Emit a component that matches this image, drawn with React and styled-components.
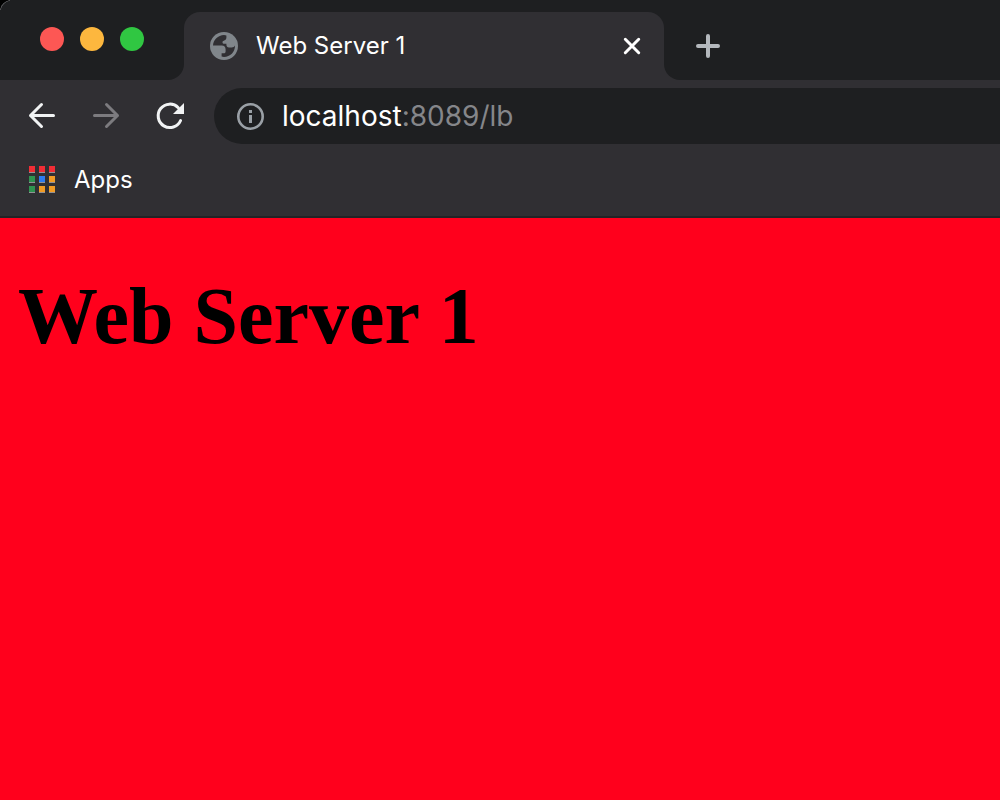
import React from "react";
import styled, { createGlobalStyle } from "styled-components";

const strip = "#1e1f21";
const chrome = "#302f33";
const ui = `Inter, "Liberation Sans", sans-serif`;

const GlobalStyle = createGlobalStyle`
  *, *::before, *::after { box-sizing: border-box; }
  body { margin: 0; background: #000; }
`;

const Window = styled.div`
  display: flex;
  flex-direction: column;
  min-height: 100vh;
  overflow: hidden;
  border-top-left-radius: 12px;
  background: ${chrome};
  font-family: ${ui};
`;

const TabStrip = styled.header`
  display: flex;
  height: 80px;
  background: linear-gradient(${strip} 50%, ${chrome} 50%);
`;

const WindowControls = styled.div`
  display: flex;
  gap: 16px;
  flex: none;
  width: 184px;
  padding: 27px 40px 0;
  border-bottom-right-radius: 16px;
  background:
    radial-gradient(circle at 12px 12px, ${strip} 11px, #77787b 12px) 0 0 / 10px 10px no-repeat,
    ${strip};
`;

const Light = styled.button`
  width: 24px;
  height: 24px;
  padding: 0;
  border: 0;
  border-radius: 50%;
  background: ${(p) => p.$color};
`;

const Tab = styled.div`
  display: flex;
  align-items: center;
  width: 480px;
  margin-top: 12px;
  padding: 0 20px 0 26px;
  border-radius: 16px 16px 0 0;
  background: ${chrome};
  color: #fff;
`;

const TabTitle = styled.span`
  flex: 1;
  margin-left: 18px;
  font-size: 24px;
  line-height: 32px;
`;

const StripRest = styled.div`
  flex: 1;
  padding: 34px 32px 0;
  border-bottom-left-radius: 16px;
  background: ${strip};
`;

const IconButton = styled.button`
  display: flex;
  flex: none;
  padding: 0;
  border: 0;
  background: none;
  color: ${(p) => p.$color || "#f1f3f4"};
`;

const Toolbar = styled.nav`
  display: flex;
  align-items: center;
  gap: 32px;
  height: 72px;
  padding-left: 26px;
`;

const AddressBar = styled.div`
  display: flex;
  flex: 1;
  align-items: center;
  gap: 16px;
  height: 56px;
  margin-left: -4px;
  padding-left: 20px;
  border-radius: 28px 0 0 28px;
  background: ${strip};
`;

const Address = styled.a`
  color: #85868a;
  font-size: 28px;
  line-height: 36px;
  text-decoration: none;
`;

const Host = styled.span`
  color: #fff;
`;

const Bookmarks = styled.nav`
  display: flex;
  align-items: center;
  height: 66px;
  padding: 0 28px 8px;
  border-bottom: 2px solid #232326;
`;

const AppsLink = styled.a`
  display: flex;
  align-items: center;
  gap: 18px;
  color: #fff;
  font-size: 24px;
  line-height: 32px;
  text-decoration: none;
`;

const Page = styled.main`
  flex: 1;
  padding: 52px 18px;
  background: #ff001c;
`;

const Heading = styled.h1`
  margin: 0;
  color: #000;
  font: bold 80px/92px "Liberation Serif", serif;
`;

const Stroke = ({ size, d, width = 3 }) => (
  <svg width={size} height={size} viewBox={`0 0 ${size} ${size}`} fill="none"
    stroke="currentColor" strokeWidth={width} strokeLinecap="round" strokeLinejoin="round" aria-hidden="true">
    <path d={d} />
  </svg>
);

const Globe = () => (
  <svg width="28" height="28" viewBox="0 0 28 28" aria-hidden="true">
    <circle cx="14" cy="14" r="14" fill="#80868b" />
    <path fill={chrome} d="M3 13.6C3.2 8 8 3.3 14 3.1L16.4 3.5V5.6C16.4 7.2 15.6 8 14.2 8.6C12.8 9.2 12.5 9.6 12.5 10.6C12.5 11.5 13.2 11.8 14.4 11.8H16.4V12.8C16.4 14.4 17.4 15.4 19 15.4H21.6C23.4 15.4 24.4 14.7 25 13.5C25.2 20 20.1 25 14 25L11.6 24.6V21.3H13.4C14.8 21.3 15.6 20.6 15.6 19.4V17.4C15.6 15 14.2 13.6 11.8 13.6Z" />
  </svg>
);

const Reload = () => (
  <svg width="32" height="32" viewBox="0 0 32 32" aria-hidden="true">
    <path d="M26.6 20.5A11.7 11.7 0 1 1 24.3 7.7" fill="none" stroke="currentColor" strokeWidth="3" strokeLinecap="round" />
    <path d="M30 3V14H19Z" fill="currentColor" />
  </svg>
);

const Info = () => (
  <svg width="32" height="32" viewBox="0 0 32 32" aria-hidden="true">
    <circle cx="16.5" cy="16.5" r="12.2" fill="none" stroke="#9aa0a6" strokeWidth="2.6" />
    <path d="M15 10H18V13H15ZM15 15H18V23H15Z" fill="#9aa0a6" />
  </svg>
);

const appColors = ["#f12d35", "#f12d35", "#f12d35", "#2f9350", "#2d7bf0", "#f09b25", "#2f9350", "#f09b25", "#f09b25"];

const AppsIcon = () => (
  <svg width="28" height="28" viewBox="0 0 28 28" aria-hidden="true">
    {appColors.map((color, i) => {
      const x = 1 + (i % 3) * 10;
      const y = Math.floor(i / 3) * 10;
      return (
        <g key={i}>
          <rect x={x} y={y} width="6" height="7" fill="#929296" />
          <rect x={x} y={y} width="6" height="6" fill={color} />
        </g>
      );
    })}
  </svg>
);

export default function App() {
  return (
    <>
      <GlobalStyle />
      <Window>
        <TabStrip>
          <WindowControls>
            <Light $color="#fd5754" aria-label="Close window" />
            <Light $color="#fdb73e" aria-label="Minimize window" />
            <Light $color="#30c742" aria-label="Zoom window" />
          </WindowControls>
          <Tab>
            <Globe />
            <TabTitle>Web Server 1</TabTitle>
            <IconButton $color="#fff" aria-label="Close tab">
              <Stroke size={24} d="M5.3 5.3L18.7 18.7M18.7 5.3L5.3 18.7" />
            </IconButton>
          </Tab>
          <StripRest>
            <IconButton $color="#b4b8bd" aria-label="New tab">
              <Stroke size={24} width={4} d="M12 2V22M2 12H22" />
            </IconButton>
          </StripRest>
        </TabStrip>
        <Toolbar>
          <IconButton aria-label="Back">
            <Stroke size={32} d="M27.5 15.5H4.5M15.5 4.5L4.5 15.5L15.5 26.5" />
          </IconButton>
          <IconButton $color="#7c7b7f" aria-label="Forward">
            <Stroke size={32} d="M4.5 15.5H27.5M16.5 4.5L27.5 15.5L16.5 26.5" />
          </IconButton>
          <IconButton aria-label="Reload"><Reload /></IconButton>
          <AddressBar>
            <Info />
            <Address href="#lb"><Host>localhost</Host>:8089/lb</Address>
          </AddressBar>
        </Toolbar>
        <Bookmarks>
          <AppsLink href="#apps"><AppsIcon />Apps</AppsLink>
        </Bookmarks>
        <Page>
          <Heading>Web Server 1</Heading>
        </Page>
      </Window>
    </>
  );
}
